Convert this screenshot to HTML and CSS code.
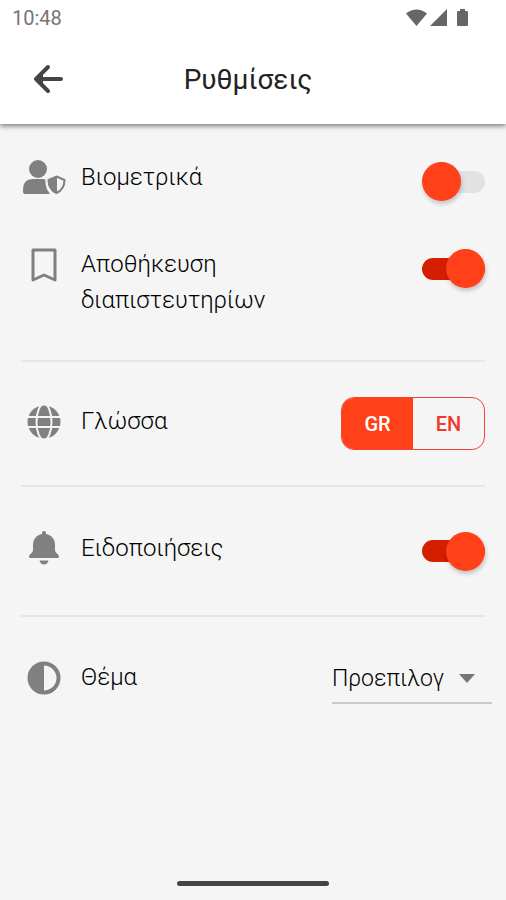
FILE: index.html
```html
<!DOCTYPE html>
<html lang="el">
<head>
<meta charset="utf-8">
<meta name="viewport" content="width=device-width, initial-scale=1">
<title>Ρυθμίσεις</title>
<link rel="stylesheet" href="styles.css">
</head>
<body>
<header class="top">
  <div class="status">
    <span class="clock">10:48</span>
    <svg class="status-icons" width="64" height="20" viewBox="0 0 64 20" aria-hidden="true">
      <path d="M0 5.500Q10.500-2.500 21 5.500L10.500 18Z"/>
      <path d="M24 18L41 1V18Z"/>
      <path d="M51 4Q51 3 52 3H54V1H59V3H61Q62 3 62 4V17Q62 18 61 18H52Q51 18 51 17Z"/>
    </svg>
  </div>
  <div class="bar">
    <button class="back" type="button" aria-label="Πίσω">
      <svg width="32" height="32" viewBox="0 0 32 32" aria-hidden="true"><path d="M16 4L4 16L16 28M5 16H29"/><path class="tip" d="M4 16L11 9V23Z"/></svg>
    </button>
    <h1 class="title">Ρυθμίσεις</h1>
  </div>
</header>
<main class="settings">
  <section class="group group-first">
    <div class="row row-top">
      <svg class="icon" width="46" height="36" viewBox="0 0 46 36" aria-hidden="true">
        <circle cx="17" cy="10" r="9"/>
        <path d="M2 33V31Q2 20 12 20H22Q23.500 20 24.500 21V25Q25 30 29 35H4Q2 35 2 33Z"/>
        <path class="line" d="M35.500 17.500L43.500 21C43.500 27 41 31.500 35.500 34C30 31.500 27.500 27 27.500 21Z"/>
        <path d="M36 17V35C30 32 27 27 27 21Z"/>
      </svg>
      <label class="label" for="bio">Βιομετρικά</label>
      <input class="switch" id="bio" type="checkbox" role="switch">
    </div>
    <div class="row row-top">
      <svg class="icon" width="46" height="36" viewBox="0 0 46 36" aria-hidden="true">
        <path class="line bold" d="M12 4H34V34L23 29L12 34Z"/>
      </svg>
      <label class="label" for="save">Αποθήκευση διαπιστευτηρίων</label>
      <input class="switch" id="save" type="checkbox" role="switch" checked>
    </div>
  </section>
  <section class="group">
    <div class="row">
      <svg class="icon" width="46" height="36" viewBox="0 0 46 36" aria-hidden="true">
        <circle cx="23" cy="19" r="16.500"/>
        <g class="cut"><ellipse cx="23" cy="19" rx="7.500" ry="18"/><path d="M6 14H40M6 24H40"/></g>
      </svg>
      <span class="label" id="lang">Γλώσσα</span>
      <div class="segments" role="group" aria-labelledby="lang">
        <button class="segment selected" type="button" aria-pressed="true">GR</button>
        <button class="segment" type="button" aria-pressed="false">EN</button>
      </div>
    </div>
  </section>
  <section class="group group-tall">
    <div class="row">
      <svg class="icon" width="46" height="36" viewBox="0 0 46 36" aria-hidden="true">
        <path d="M21 4V3Q21 1 23 1T25 3V4C31 5 34 10 34 15V20C34 23 38 24 38 27Q38 28 37 28H9Q8 28 8 27C8 24 12 23 12 20V15C12 10 15 5 21 4Z"/>
        <path d="M18.500 30.500H27.500Q26.500 34.500 23 34.500T18.500 30.500Z"/>
      </svg>
      <label class="label" for="notify">Ειδοποιήσεις</label>
      <input class="switch" id="notify" type="checkbox" role="switch" checked>
    </div>
  </section>
  <section class="group group-last">
    <div class="row row-select">
      <svg class="icon" width="46" height="36" viewBox="0 0 46 36" aria-hidden="true">
        <circle class="line thick" cx="23" cy="19" r="14.500"/>
        <path d="M23 3V35A16 16 0 0 1 23 3Z"/>
      </svg>
      <label class="label" for="theme">Θέμα</label>
      <div class="picker">
        <select id="theme"><option>Προεπιλογ</option></select>
        <svg width="18" height="9" viewBox="0 0 18 9" aria-hidden="true"><path d="M1 0H17L9 9Z"/></svg>
      </div>
    </div>
  </section>
</main>
<footer class="home"><span class="handle"></span></footer>
</body>
</html>
```
FILE: styles.css
```css
* { box-sizing: border-box; }

body {
  margin: 0;
  min-height: 100vh;
  display: flex;
  flex-direction: column;
  background: #f5f5f5;
  color: #222;
  font-family: Roboto, "Noto Sans", sans-serif;
}

button, select { font: inherit; }

.top {
  background: #fff;
  box-shadow: 0 2px 5px rgba(0, 0, 0, 0.5);
}

.status {
  display: flex;
  align-items: center;
  justify-content: space-between;
  height: 36px;
  padding: 0 36px 0 12px;
}

.clock { color: #757575; font-size: 20px; line-height: 36px; }
.status-icons { fill: #666; }

.bar {
  display: grid;
  grid-template-columns: 64px 1fr 74px;
  align-items: center;
  height: 88px;
  padding: 0 16px;
}

.back {
  display: flex;
  justify-content: center;
  padding: 6px 8px 8px;
  border: 0;
  background: none;
}

.back svg {
  fill: none;
  stroke: #444;
  stroke-width: 4;
  stroke-linecap: round;
  stroke-linejoin: round;
}

.back .tip { fill: #444; stroke: none; }

.title {
  margin: 0;
  text-align: center;
  font-size: 28px;
  font-weight: 400;
  line-height: 36px;
}

.settings { flex: 1; padding: 0 21px; }

.group {
  display: flex;
  flex-direction: column;
  justify-content: center;
  min-height: 125px;
  border-bottom: 2px solid #e6e6e6;
}

.group-first { gap: 45px; padding: 35px 0 42px; }
.group-tall { min-height: 130px; }
.group-last { border: 0; }

.row {
  display: grid;
  grid-template-columns: 46px 1fr auto;
  column-gap: 14px;
  align-items: center;
}

.row-top { align-items: start; }
.row-top .switch { margin-top: 3px; }

.icon { fill: #808080; }
.icon .line { fill: none; stroke: #808080; stroke-width: 2; }
.icon .bold { stroke-width: 3; stroke-linejoin: round; }
.icon .thick { stroke-width: 4; }
.icon .cut { fill: none; stroke: #f5f5f5; stroke-width: 2; }

.label {
  padding-right: 24px;
  font-size: 24px;
  line-height: 36px;
  font-weight: 300;
  color: #000;
}

.row:not(.row-top) > .label,
.row:not(.row-top) > .icon { margin-bottom: 6px; }

.switch {
  appearance: none;
  display: flex;
  align-items: center;
  position: relative;
  width: 63px;
  height: 39px;
  margin: 0;
}

.switch::before {
  content: "";
  width: 100%;
  height: 22px;
  border-radius: 11px;
  background: #e2e2e2;
}

.switch::after {
  content: "";
  position: absolute;
  left: 0;
  width: 39px;
  height: 39px;
  border-radius: 50%;
  background: #ff4019;
  box-shadow: 1px 3px 4px rgba(0, 0, 0, 0.2);
}

.switch:checked::before { background: #d41e00; }
.switch:checked::after { left: auto; right: 0; }

.segments {
  display: flex;
  width: 144px;
  height: 53px;
  border: 1px solid #f44336;
  border-radius: 13px;
  overflow: hidden;
}

.segment {
  flex: 1;
  padding: 0;
  border: 0;
  background: none;
  color: #f0392b;
  font-size: 20px;
  font-weight: 500;
}

.segment.selected { background: #ff4019; color: #fff; }

.row-select { margin-right: -7px; }

.picker {
  display: flex;
  align-items: center;
  width: 160px;
  height: 48px;
  padding-right: 16px;
  border-bottom: 2px solid #c8c8c8;
}

.picker select {
  appearance: none;
  flex: none;
  width: 116px;
  height: 46px;
  margin-right: auto;
  padding: 0;
  border: 0;
  background: none;
  color: #000;
  font-size: 23px;
  font-weight: 300;
}

.picker svg { fill: #777; }

.home { display: flex; justify-content: center; padding: 14px 0; }
.handle { width: 152px; height: 5px; border-radius: 3px; background: #444; }
```
